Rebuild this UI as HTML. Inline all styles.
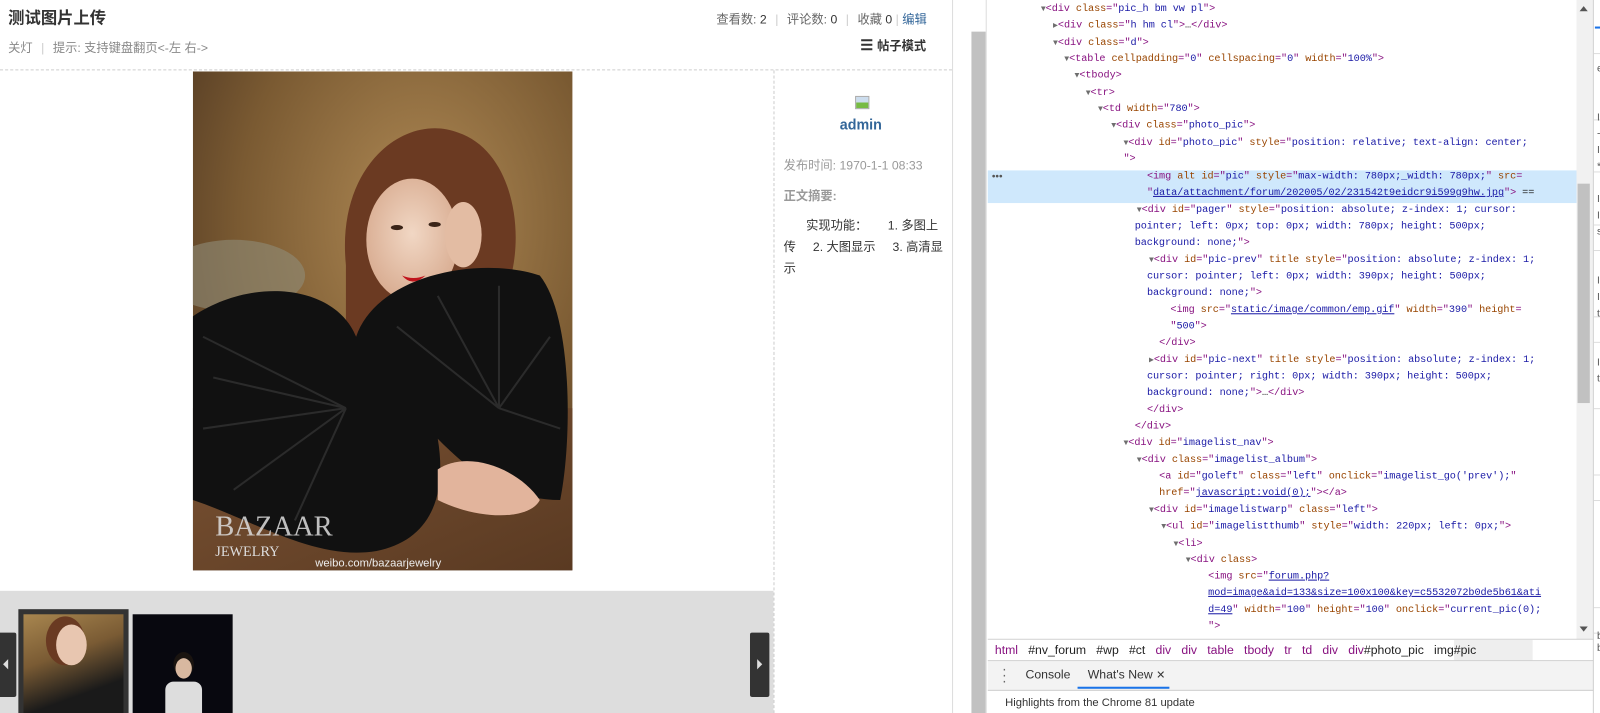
<!DOCTYPE html>
<html><head><meta charset="utf-8"><style>
*{margin:0;padding:0;box-sizing:border-box}
html,body{width:1600px;height:699px;overflow:hidden;background:#fff}
#w{position:absolute;left:0;top:0;width:1568px;height:685px;transform:scale(1.020408);transform-origin:0 0;font-family:"Liberation Sans","Noto Sans CJK SC",sans-serif;font-size:12px;color:#333}
.abs{position:absolute}
.dt{position:absolute;left:0;top:0;font-family:"Liberation Mono","DejaVu Sans Mono",monospace;font-size:10px;letter-spacing:-0.07px;white-space:pre;color:#222}
.ln{position:absolute;height:16px;line-height:16px}
.t{color:#881280}.a{color:#994500}.v{color:#1a1aa6}.l{color:#1a1aa6;text-decoration:underline}.g{color:#a8a8a8}
.tri{color:#6e6e6e;font-size:8px}
</style></head><body><div id="w">

<div class="abs" style="left:8px;top:4px;font-size:16px;font-weight:bold;color:#333">测试图片上传</div>
<div class="abs" style="left:702px;top:10px;color:#666;font-size:12px">查看数: <span style="color:#333">2</span> <span style="color:#ccc;margin:0 5px">|</span> 评论数: <span style="color:#333">0</span> <span style="color:#ccc;margin:0 5px">|</span> 收藏 <span style="color:#333">0</span> <span style="color:#ccc">|</span> <span style="color:#369">编辑</span></div>
<div class="abs" style="left:8px;top:38px;color:#888">关灯 <span style="color:#ccc;margin:0 5px">|</span> 提示: 支持键盘翻页&lt;-左 右-&gt;</div>
<div class="abs" style="left:843px;top:36px;font-weight:bold;color:#333;font-size:12px"><span style="font-size:14px;margin-right:4px">☰</span>帖子模式</div>
<div class="abs" style="left:0;top:68px;width:933px;border-top:1px dashed #cdcdcd"></div>
<div class="abs" style="left:758px;top:69px;height:630px;border-left:1px dashed #cdcdcd"></div>
<div class="abs" style="left:933px;top:0;width:1px;height:699px;background:#ddd"></div>

<svg class="abs" style="left:189px;top:70px" width="372" height="489" viewBox="0 0 372 489">
<defs>
<radialGradient id="bg" cx="0.6" cy="0.3" r="0.8"><stop offset="0" stop-color="#b08a55"/><stop offset="0.6" stop-color="#7a5a32"/><stop offset="1" stop-color="#4a3320"/></radialGradient>
<radialGradient id="face" cx="0.5" cy="0.45" r="0.55"><stop offset="0" stop-color="#f1d7c4"/><stop offset="1" stop-color="#d9ad92"/></radialGradient>
<linearGradient id="tbl" x1="0" y1="0" x2="1" y2="1"><stop offset="0" stop-color="#7a5233"/><stop offset="1" stop-color="#5a3a22"/></linearGradient>
</defs>
<rect width="372" height="489" fill="url(#bg)"/>
<ellipse cx="40" cy="200" rx="70" ry="35" fill="#8f8c78" opacity="0.6"/>
<rect x="0" y="330" width="372" height="159" fill="url(#tbl)"/>
<path d="M150 190 C140 90 210 40 260 60 C320 80 330 180 300 230 L300 260 L150 260 Z" fill="#6b3a22"/>
<ellipse cx="215" cy="165" rx="45" ry="60" fill="url(#face)"/>
<path d="M205 200 Q215 212 228 200 Q216 205 205 200Z" fill="#c0141c"/>
<ellipse cx="200" cy="153" rx="6" ry="2.5" fill="#3a2418"/><ellipse cx="237" cy="150" rx="6" ry="2.5" fill="#3a2418"/>
<ellipse cx="265" cy="160" rx="18" ry="32" fill="#e3bca3"/>
<path d="M0 240 C60 200 140 210 160 260 C180 200 280 180 340 200 C372 240 372 360 360 420 C300 420 260 380 240 360 C250 420 230 460 180 470 C120 480 60 440 0 420 Z" fill="#111"/>
<path d="M10 260 L150 330 M20 300 L150 330 M10 350 L150 330 M40 410 L150 330 M100 440 L150 330 M200 250 L300 330 M240 220 L300 330 M300 210 L300 330 M350 260 L300 330 M360 350 L300 330" stroke="#2b2b2b" stroke-width="2"/>
<path d="M240 390 C270 370 320 390 340 420 C330 440 280 440 240 420Z" fill="#e2b49c"/>
<text x="22" y="455" font-family="Liberation Serif" font-size="28" fill="#ddd" opacity="0.85">BAZAAR</text>
<text x="22" y="475" font-family="Liberation Serif" font-size="14" fill="#ddd">JEWELRY</text>
<text x="120" y="485" font-family="Liberation Sans" font-size="11" fill="#eee">weibo.com/bazaarjewelry</text>
</svg>

<div class="abs" style="left:838px;top:94px;width:14px;height:13px;background:linear-gradient(#cde 50%,#7b4 50%);border:1px solid #aaa"></div>
<div class="abs" style="left:823px;top:114px;font-weight:bold;font-size:14px;color:#369">admin</div>
<div class="abs" style="left:768px;top:153px;color:#999">发布时间: 1970-1-1 08:33</div>
<div class="abs" style="left:768px;top:183px;color:#999;font-weight:bold">正文摘要:</div>
<div class="abs" style="left:768px;top:211px;width:160px;line-height:21px;color:#333;text-indent:22px">实现功能：&nbsp;&nbsp;&nbsp;&nbsp;&nbsp;&nbsp;1. 多图上传&nbsp;&nbsp;&nbsp;&nbsp;&nbsp;2. 大图显示&nbsp;&nbsp;&nbsp;&nbsp;&nbsp;3. 高清显示</div>

<div class="abs" style="left:0;top:579px;width:758px;height:120px;background:#ddd"></div>
<div class="abs" style="left:18px;top:597px;width:108px;height:102px;background:#333"></div>
<div class="abs" style="left:23px;top:602px;width:98px;height:97px;background:linear-gradient(160deg,#a8864f 0%,#7a5b34 40%,#1a1a1a 75%)"></div>
<div class="abs" style="left:55px;top:612px;width:30px;height:40px;border-radius:50%;background:#e8c6b0;box-shadow:-6px -4px 0 4px #6a3a22"></div>
<div class="abs" style="left:130px;top:602px;width:98px;height:97px;background:#08080f"></div>
<div class="abs" style="left:172px;top:645px;width:16px;height:20px;border-radius:50%;background:#d8b8a0;box-shadow:0 -4px 0 2px #1a1410"></div>
<div class="abs" style="left:162px;top:668px;width:36px;height:31px;background:#ddd;border-radius:8px 8px 0 0"></div>
<div class="abs" style="left:0;top:620px;width:16px;height:63px;background:#333;border-radius:0 2px 2px 0"></div>
<div class="abs" style="left:3px;top:646px;border:5px solid transparent;border-right:5px solid #ddd;border-left:0"></div>
<div class="abs" style="left:735px;top:620px;width:19px;height:63px;background:#333;border-radius:2px"></div>
<div class="abs" style="left:742px;top:646px;border:5px solid transparent;border-left:5px solid #ddd;border-right:0"></div>

<div class="abs" style="left:952px;top:31px;width:14px;height:668px;background:#c1c1c1"></div>
<div class="abs" style="left:966px;top:0;width:1px;height:699px;background:#ddd"></div>

<div class="abs" style="left:968px;top:167px;width:577px;height:32px;background:#cfe8fc"></div>
<div class="abs" style="left:972px;top:168px;color:#555;font-size:10px">•••</div>
<div class="dt">
<div class="ln" style="left:1020px;top:2px"><span class="tri">▼</span><span class="t">&lt;div </span><span class="a">class</span><span class="t">="</span><span class="v">pic_h bm vw pl</span><span class="t">"&gt;</span></div>
<div class="ln" style="left:1032px;top:18px"><span class="tri">▶</span><span class="t">&lt;div </span><span class="a">class</span><span class="t">="</span><span class="v">h hm cl</span><span class="t">"&gt;</span>…<span class="t">&lt;/div&gt;</span></div>
<div class="ln" style="left:1032px;top:35px"><span class="tri">▼</span><span class="t">&lt;div </span><span class="a">class</span><span class="t">="</span><span class="v">d</span><span class="t">"&gt;</span></div>
<div class="ln" style="left:1043px;top:51px"><span class="tri">▼</span><span class="t">&lt;table </span><span class="a">cellpadding</span><span class="t">="</span><span class="v">0</span><span class="t">" </span><span class="a">cellspacing</span><span class="t">="</span><span class="v">0</span><span class="t">" </span><span class="a">width</span><span class="t">="</span><span class="v">100%</span><span class="t">"&gt;</span></div>
<div class="ln" style="left:1053px;top:67px"><span class="tri">▼</span><span class="t">&lt;tbody&gt;</span></div>
<div class="ln" style="left:1064px;top:84px"><span class="tri">▼</span><span class="t">&lt;tr&gt;</span></div>
<div class="ln" style="left:1076px;top:100px"><span class="tri">▼</span><span class="t">&lt;td </span><span class="a">width</span><span class="t">="</span><span class="v">780</span><span class="t">"&gt;</span></div>
<div class="ln" style="left:1089px;top:116px"><span class="tri">▼</span><span class="t">&lt;div </span><span class="a">class</span><span class="t">="</span><span class="v">photo_pic</span><span class="t">"&gt;</span></div>
<div class="ln" style="left:1101px;top:133px"><span class="tri">▼</span><span class="t">&lt;div </span><span class="a">id</span><span class="t">="</span><span class="v">photo_pic</span><span class="t">" </span><span class="a">style</span><span class="t">="</span><span class="v">position: relative; text-align: center;</span></div>
<div class="ln" style="left:1101px;top:149px"><span class="t">"&gt;</span></div>
<div class="ln" style="left:1124px;top:166px"><span class="t">&lt;img </span><span class="a">alt id</span><span class="t">="</span><span class="v">pic</span><span class="t">" </span><span class="a">style</span><span class="t">="</span><span class="v">max-width: 780px;_width: 780px;</span><span class="t">" </span><span class="a">src</span><span class="t">=</span></div>
<div class="ln" style="left:1124px;top:182px"><span class="t">"</span><span class="l">data/attachment/forum/202005/02/231542t9eidcr9i599g9hw.jpg</span><span class="t">"&gt;</span> == </div>
<div class="ln" style="left:1114px;top:199px"><span class="tri">▼</span><span class="t">&lt;div </span><span class="a">id</span><span class="t">="</span><span class="v">pager</span><span class="t">" </span><span class="a">style</span><span class="t">="</span><span class="v">position: absolute; z-index: 1; cursor:</span></div>
<div class="ln" style="left:1112px;top:215px"><span class="v">pointer; left: 0px; top: 0px; width: 780px; height: 500px;</span></div>
<div class="ln" style="left:1112px;top:231px"><span class="v">background: none;</span><span class="t">"&gt;</span></div>
<div class="ln" style="left:1126px;top:248px"><span class="tri">▼</span><span class="t">&lt;div </span><span class="a">id</span><span class="t">="</span><span class="v">pic-prev</span><span class="t">" </span><span class="a">title style</span><span class="t">="</span><span class="v">position: absolute; z-index: 1;</span></div>
<div class="ln" style="left:1124px;top:264px"><span class="v">cursor: pointer; left: 0px; width: 390px; height: 500px;</span></div>
<div class="ln" style="left:1124px;top:280px"><span class="v">background: none;</span><span class="t">"&gt;</span></div>
<div class="ln" style="left:1147px;top:297px"><span class="t">&lt;img </span><span class="a">src</span><span class="t">="</span><span class="l">static/image/common/emp.gif</span><span class="t">" </span><span class="a">width</span><span class="t">="</span><span class="v">390</span><span class="t">" </span><span class="a">height</span><span class="t">=</span></div>
<div class="ln" style="left:1147px;top:313px"><span class="t">"</span><span class="v">500</span><span class="t">"&gt;</span></div>
<div class="ln" style="left:1136px;top:329px"><span class="t">&lt;/div&gt;</span></div>
<div class="ln" style="left:1126px;top:346px"><span class="tri">▶</span><span class="t">&lt;div </span><span class="a">id</span><span class="t">="</span><span class="v">pic-next</span><span class="t">" </span><span class="a">title style</span><span class="t">="</span><span class="v">position: absolute; z-index: 1;</span></div>
<div class="ln" style="left:1124px;top:362px"><span class="v">cursor: pointer; right: 0px; width: 390px; height: 500px;</span></div>
<div class="ln" style="left:1124px;top:378px"><span class="v">background: none;</span><span class="t">"&gt;</span>…<span class="t">&lt;/div&gt;</span></div>
<div class="ln" style="left:1124px;top:395px"><span class="t">&lt;/div&gt;</span></div>
<div class="ln" style="left:1112px;top:411px"><span class="t">&lt;/div&gt;</span></div>
<div class="ln" style="left:1101px;top:427px"><span class="tri">▼</span><span class="t">&lt;div </span><span class="a">id</span><span class="t">="</span><span class="v">imagelist_nav</span><span class="t">"&gt;</span></div>
<div class="ln" style="left:1114px;top:444px"><span class="tri">▼</span><span class="t">&lt;div </span><span class="a">class</span><span class="t">="</span><span class="v">imagelist_album</span><span class="t">"&gt;</span></div>
<div class="ln" style="left:1136px;top:460px"><span class="t">&lt;a </span><span class="a">id</span><span class="t">="</span><span class="v">goleft</span><span class="t">" </span><span class="a">class</span><span class="t">="</span><span class="v">left</span><span class="t">" </span><span class="a">onclick</span><span class="t">="</span><span class="v">imagelist_go('prev');</span><span class="t">"</span></div>
<div class="ln" style="left:1136px;top:476px"><span class="a">href</span><span class="t">="</span><span class="l">javascript:void(0);</span><span class="t">"&gt;&lt;/a&gt;</span></div>
<div class="ln" style="left:1126px;top:493px"><span class="tri">▼</span><span class="t">&lt;div </span><span class="a">id</span><span class="t">="</span><span class="v">imagelistwarp</span><span class="t">" </span><span class="a">class</span><span class="t">="</span><span class="v">left</span><span class="t">"&gt;</span></div>
<div class="ln" style="left:1138px;top:509px"><span class="tri">▼</span><span class="t">&lt;ul </span><span class="a">id</span><span class="t">="</span><span class="v">imagelistthumb</span><span class="t">" </span><span class="a">style</span><span class="t">="</span><span class="v">width: 220px; left: 0px;</span><span class="t">"&gt;</span></div>
<div class="ln" style="left:1150px;top:526px"><span class="tri">▼</span><span class="t">&lt;li&gt;</span></div>
<div class="ln" style="left:1162px;top:542px"><span class="tri">▼</span><span class="t">&lt;div </span><span class="a">class</span><span class="t">&gt;</span></div>
<div class="ln" style="left:1184px;top:558px"><span class="t">&lt;img </span><span class="a">src</span><span class="t">="</span><span class="l">forum.php?</span></div>
<div class="ln" style="left:1184px;top:574px"><span class="l">mod=image&amp;aid=133&amp;size=100x100&amp;key=c5532072b0de5b61&amp;ati</span></div>
<div class="ln" style="left:1184px;top:591px"><span class="l">d=49</span><span class="t">" </span><span class="a">width</span><span class="t">="</span><span class="v">100</span><span class="t">" </span><span class="a">height</span><span class="t">="</span><span class="v">100</span><span class="t">" </span><span class="a">onclick</span><span class="t">="</span><span class="v">current_pic(0);</span></div>
<div class="ln" style="left:1184px;top:607px"><span class="t">"&gt;</span></div>
</div>

<div class="abs" style="left:1545px;top:0;width:16px;height:627px;background:#f1f1f1"></div>
<div class="abs" style="left:1548px;top:6px;border:4px solid transparent;border-bottom:5px solid #555;border-top:0"></div>
<div class="abs" style="left:1546px;top:180px;width:12px;height:215px;background:#c1c1c1"></div>
<div class="abs" style="left:1548px;top:614px;border:4px solid transparent;border-top:5px solid #555;border-bottom:0"></div>

<div class="abs" style="left:968px;top:626px;width:594px;height:1px;background:#ccc"></div>
<div class="abs" style="left:968px;top:627px;width:594px;height:20px;background:#fff"></div>
<div class="abs" style="left:1425px;top:627px;width:77px;height:20px;background:#eee"></div>
<div class="abs" style="left:975px;top:630px;font-size:12px;white-space:pre;color:#222"><span class="t">html</span>   #nv_forum   #wp   #ct   <span class="t">div</span>   <span class="t">div</span>   <span class="t">table</span>   <span class="t">tbody</span>   <span class="t">tr</span>   <span class="t">td</span>   <span class="t">div</span>   <span class="t">div</span>#photo_pic   img#pic</div>
<div class="abs" style="left:968px;top:647px;width:594px;height:1px;background:#ccc"></div>
<div class="abs" style="left:968px;top:648px;width:594px;height:28px;background:#f3f3f3"></div>
<div class="abs" style="left:982px;top:652px;font-size:14px;color:#666;line-height:6px">·<br>·<br>·</div>
<div class="abs" style="left:1005px;top:654px;font-size:12px;color:#333">Console</div>
<div class="abs" style="left:1066px;top:654px;font-size:12px;color:#333">What's New <span style="font-size:11px">✕</span></div>
<div class="abs" style="left:1056px;top:673px;width:90px;height:2px;background:#1a73e8"></div>
<div class="abs" style="left:968px;top:676px;width:594px;height:1px;background:#ccc"></div>
<div class="abs" style="left:985px;top:683px;font-size:11px;color:#333">Highlights from the Chrome 81 update</div>

<div class="abs" style="left:1561px;top:0;width:1px;height:699px;background:#ccc"></div>
<div class="abs" style="left:1562px;top:0;width:38px;height:699px;background:#fff"></div>
<div class="abs" style="left:1563px;top:26px;width:37px;height:2px;background:#1a73e8"></div>
<div class="abs" style="left:1562px;top:52px;width:38px;height:1px;background:#ddd"></div>
<div class="abs" style="left:1562px;top:117px;width:38px;height:1px;background:#ddd"></div>
<div class="abs" style="left:1562px;top:168px;width:38px;height:1px;background:#ddd"></div>
<div class="abs" style="left:1562px;top:220px;width:38px;height:1px;background:#ddd"></div>
<div class="abs" style="left:1562px;top:245px;width:38px;height:1px;background:#ddd"></div>
<div class="abs" style="left:1562px;top:310px;width:38px;height:1px;background:#ddd"></div>
<div class="abs" style="left:1562px;top:335px;width:38px;height:1px;background:#ddd"></div>
<div class="abs" style="left:1562px;top:400px;width:38px;height:1px;background:#ddd"></div>
<div class="abs" style="left:1562px;top:465px;width:38px;height:1px;background:#ddd"></div>
<div class="abs" style="left:1562px;top:490px;width:38px;height:1px;background:#ddd"></div>
<div class="abs" style="left:1562px;top:595px;width:38px;height:1px;background:#ddd"></div>
<div class="abs" style="left:1562px;top:620px;width:38px;height:1px;background:#ddd"></div>
<div class="abs" style="left:1565px;top:60px;font-size:10px;color:#555;line-height:16px">e<br><br><br>I<br>-<br>I<br>*<br><br>I<br>I<br>s<br><br><br>I<br>I<br>t<br><br><br>I<br>t</div>
<div class="abs" style="left:1565px;top:618px;font-size:10px;color:#555;line-height:12px">b<br>b</div>
</div></body></html>
